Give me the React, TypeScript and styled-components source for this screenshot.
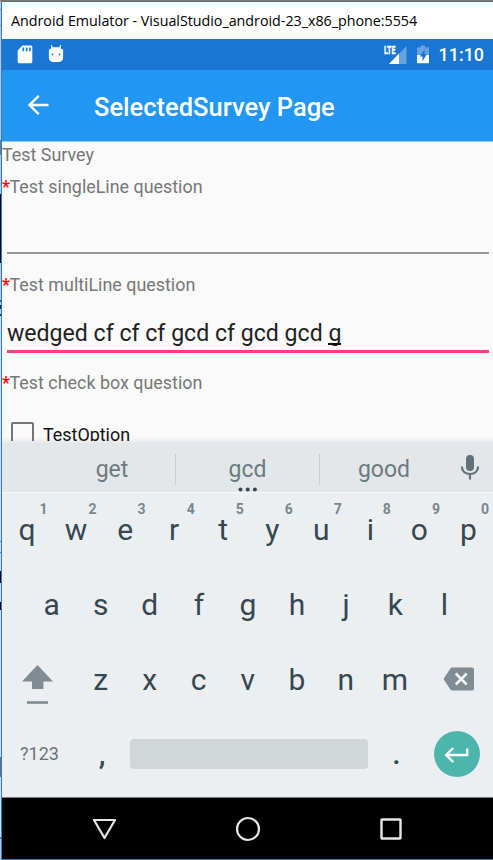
import React from "react";
import styled, { createGlobalStyle } from "styled-components";

const GlobalStyle = createGlobalStyle`
  * { box-sizing: border-box; }
  html, body { margin: 0; padding: 0; }
  body { width: 493px; height: 860px; overflow: hidden; font-family: Roboto, sans-serif; }
  svg { display: block; flex: none; }
`;

const Desktop = styled.div`
  width: 493px;
  height: 860px;
  padding: 1px 0 0 1px;
  background: linear-gradient(
    to bottom,
    #75797d 0 1px, #c4c6c8 1px 9px, #8a8d90 9px 10px, #c4c6c8 10px 25px, #8a8d90 25px 26px,
    #c4c6c8 26px 140px, #75797d 140px 155px, #c4c6c8 155px 194px, #000 194px 263px,
    #c4c6c8 263px 300px, #1b5f93 300px 302px, #c4c6c8 302px 305px, #222 305px 309px,
    #c4c6c8 309px 314px, #123 314px 316px, #d8dadc 316px 541px, #2b8bd6 541px 542px,
    #d8dadc 542px 552px, #2b8bd6 552px 553px, #d8dadc 553px 571px, #000 571px 583px,
    #d8dadc 583px 602px, #000 602px 610px, #d8dadc 610px 757px, #707274 757px 777px,
    #d8dadc 777px 837px, #777 837px 839px, #c4c6c8 839px
  );
`;

const TopEdge = styled.div`
  height: 1px;
  margin: -1px 0 0 -1px;
  background: #75797d;
`;

const Window = styled.div`
  height: 859px;
  display: flex;
  flex-direction: column;
  border: 1px solid #1f7fce;
  border-right: 0;
  background: #fafafa;
`;

const TitleBar = styled.div`
  height: 37px;
  flex: none;
  padding-left: 9px;
  background: #fff;
  color: #000;
  font: 14.3px/37px "Open Sans", sans-serif;
  letter-spacing: -0.02px;
  white-space: nowrap;
`;

const StatusBar = styled.div`
  height: 31px;
  flex: none;
  display: flex;
  align-items: center;
  padding: 0 9px 0 15px;
  background: #1976d2;
`;

const StatusGroup = styled.div<{ $gap: number; $end?: boolean }>`
  display: flex;
  align-items: center;
  gap: ${(p) => p.$gap}px;
  margin-left: ${(p) => (p.$end ? "auto" : "0")};
`;

const Clock = styled.span`
  color: #fff;
  font-size: 17.9px;
  font-weight: 500;
  line-height: 31px;
`;

const AppBar = styled.header`
  height: 72px;
  flex: none;
  display: flex;
  align-items: center;
  padding-left: 23px;
  background: #2196f3;
  border-bottom: 1px solid #8ccafb;
`;

const BackButton = styled.div`
  margin-top: -2px;
`;

const PageTitle = styled.h1`
  margin: 3px 0 0 45px;
  color: #fff;
  font-size: 25.5px;
  font-weight: 500;
  line-height: 32px;
  white-space: nowrap;
`;

const Survey = styled.main`
  height: 301px;
  flex: none;
  overflow: hidden;
  padding-top: 1px;
  position: relative;
`;

const Label = styled.div<{ $top?: number }>`
  margin-top: ${(p) => p.$top ?? 0}px;
  height: 24px;
  color: #777;
  font-size: 17.9px;
  line-height: 24px;
  white-space: nowrap;
`;

const Required = styled.span`
  color: #f00;
  font-weight: 500;
  letter-spacing: -0.4px;
`;

const Field = styled.div<{ $active?: boolean }>`
  height: ${(p) => (p.$active ? 56 : 55)}px;
  margin: 0 4px 0 5px;
  padding-top: 21px;
  border-bottom: ${(p) => (p.$active ? "3px solid #ff4081" : "2px solid #979797")};
  color: #212121;
  font-size: 23.1px;
  line-height: 32px;
  white-space: pre;
`;

const Composing = styled.span`
  position: relative;
  &::after {
    content: "";
    position: absolute;
    left: 0;
    right: 0;
    bottom: 2px;
    height: 2px;
    background: #111;
  }
`;

const CheckRow = styled.div`
  position: relative;
  display: flex;
  height: 19px;
  overflow: hidden;
  margin-top: 27px;
  padding-left: 9px;
  gap: 9px;
  color: #111;
  font-size: 17.9px;
  line-height: 26px;
`;

const Box = styled.span`
  flex: none;
  width: 23px;
  height: 23px;
  border: 2.5px solid #757575;
  border-radius: 2px;
`;

const Shade = styled.div`
  position: absolute;
  left: 0;
  right: 0;
  bottom: 0;
  height: 6px;
  background: linear-gradient(to bottom, rgba(245, 245, 245, 0), #efefef 60%, #e6e7e8);
`;

const Suggestions = styled.div`
  height: 50px;
  flex: none;
  display: flex;
  align-items: center;
  padding-left: 47px;
  background: #e3e7ea;
  border-bottom: 1px solid #f6f8f9;
`;

const Suggestion = styled.div<{ $width: number; $divided?: boolean }>`
  position: relative;
  width: ${(p) => p.$width}px;
  height: 31px;
  margin-top: 3px;
  border-right: ${(p) => (p.$divided ? "1px solid #c9cdd0" : "0")};
  color: #6d7a7f;
  font-size: 23px;
  line-height: 31px;
  text-align: center;
`;

const MoreDots = styled.svg`
  position: absolute;
  left: 62px;
  top: 33px;
`;

const MicButton = styled.div`
  margin-left: 12px;
`;

const Keyboard = styled.div`
  height: 305px;
  flex: none;
  display: flex;
  flex-direction: column;
  background: #ebeff2;
  border-bottom: 1px solid #777b7e;
`;

const KeyRow = styled.div<{ $inset?: boolean }>`
  height: 75px;
  flex: none;
  display: flex;
  align-items: center;
  padding: ${(p) => (p.$inset ? "0 24px 0 25px" : "0 0 0 0.5px")};
  &:first-child { margin-top: -1px; }
  &:last-child { height: 74px; }
`;

const Key = styled.div<{ $wide?: boolean }>`
  position: relative;
  flex: ${(p) => (p.$wide ? "0 0 73.6px" : "1 1 0")};
  height: 75px;
  display: flex;
  align-items: center;
  justify-content: center;
  color: #37474f;
  font-size: 30px;
  line-height: 75px;
`;

const ShiftIcon = styled.svg`
  margin: 11px 4px 0 0;
`;

const BackspaceIcon = styled.svg`
  margin: 0 0 2px 5px;
`;

const Hint = styled.span`
  position: absolute;
  right: 4px;
  top: 9px;
  color: #79868b;
  font-size: 14px;
  font-weight: 700;
  line-height: 16px;
`;

const SymbolKey = styled.div`
  width: 74px;
  text-align: center;
  color: #67757b;
  font-size: 18px;
  line-height: 74px;
`;

const Punctuation = styled.div<{ $width: number; $shift?: number }>`
  width: ${(p) => p.$width}px;
  padding-right: ${(p) => p.$shift ?? 0}px;
  color: #37474f;
  font-size: 30px;
  font-weight: 500;
  line-height: 74px;
  text-align: center;
`;

const SpaceBar = styled.div`
  width: 238px;
  height: 30px;
  border-radius: 4px;
  background: #d1d6d9;
`;

const EnterKey = styled.div`
  width: 46px;
  height: 46px;
  margin-left: 8.500px;
  display: flex;
  align-items: center;
  justify-content: center;
  border-radius: 50%;
  background: #4db6ac;
`;

const NavBar = styled.nav`
  flex: 1;
  display: flex;
  align-items: center;
  justify-content: space-between;
  padding: 0 90px 0 89px;
  background: #000;
`;

const SdCard = () => (
  <svg width="16" height="19" viewBox="0 0 16 19">
    <path d="M5.5 .5H14a1.3 1.3 0 0 1 1.3 1.3v15A1.3 1.3 0 0 1 14 18.2H2a1.3 1.3 0 0 1-1.3-1.3V5.6z" fill="#fff" />
    <path d="M6.3 2.5v3.700M9.700 2.5v3.700M12.900 2.5v3.700" stroke="#1976d2" strokeWidth="1.7" />
  </svg>
);

const DroidHead = () => (
  <svg width="16" height="19" viewBox="0 0 16 19">
    <path d="M3.2 .2L4.5 3.500M12.8 .2L11.5 3.500" stroke="#fff" strokeWidth="1.2" />
    <path d="M4 2.200h8l1.800 2h1.300v8.500a4.300 4.300 0 0 1-4.300 4.300H5.200A4.300 4.300 0 0 1 .9 12.700V4.200h1.300z" fill="#fff" />
    <circle cx="4.500" cy="9.500" r=".9" fill="#1976d2" />
    <circle cx="11.500" cy="9.500" r=".9" fill="#1976d2" />
  </svg>
);

const Signal = () => (
  <svg width="23" height="20" viewBox="0 0 23 20">
    <path d="M22.500 1v18H5z" fill="#64a3e1" />
    <path d="M15 8.500V19H5z" fill="#fff" />
    <path d="M0 0h12v10H0z" fill="#1976d2" />
    <text x="0" y="9" fill="#fff" stroke="#fff" strokeWidth=".35" fontFamily="Roboto" fontWeight="700" fontSize="11" textLength="11.500" lengthAdjust="spacingAndGlyphs">LTE</text>
  </svg>
);

const Battery = () => (
  <svg width="12" height="19" viewBox="0 0 12 19">
    <path d="M0 3.200a1 1 0 0 1 1-1h2.700V.5h4.600v1.700H11a1 1 0 0 1 1 1V10H0z" fill="#64a3e1" />
    <path d="M0 10h12v7.300a1 1 0 0 1-1 1H1a1 1 0 0 1-1-1z" fill="#fff" />
    <path d="M7.500 4.700L2.800 11.500h2.700v4.800l4.300-7H7.500z" fill="#1976d2" />
  </svg>
);

const BackArrow = () => (
  <svg width="24" height="22" viewBox="0 0 24 22">
    <path d="M24 11H5M14.200 1.800L5 11l9.200 9.200" transform="translate(-0.500 0)" fill="none" stroke="#fff" strokeWidth="2.400" />
  </svg>
);

const Mic = () => (
  <svg width="20" height="27" viewBox="0 0 20 27">
    <rect x="6" y="1" width="8" height="16" rx="4" fill="#637178" />
    <path d="M1.900 12.500c0 4.500 3.200 7.500 8.100 7.500s8.100-3 8.100-7.500M10 20v5.500" fill="none" stroke="#637178" strokeWidth="2.200" />
  </svg>
);

const Shift = () => (
  <ShiftIcon width="31" height="42" viewBox="0 0 31 42">
    <path d="M15.500 1L31 17.500H21.400V25H10V17.500H0z" fill="#808c91" />
    <path d="M5 38.500h21" stroke="#808c91" strokeWidth="2.600" />
  </ShiftIcon>
);

const Backspace = () => (
  <BackspaceIcon width="32" height="24" viewBox="0 0 32 24">
    <path d="M9 .5h20a2 2 0 0 1 2 2v19a2 2 0 0 1-2 2H9a2 2 0 0 1-1.600-.9L.5 12l6.900-10.600A2 2 0 0 1 9 .5z" fill="#808c91" />
    <path d="M12.700 6.500L23.700 17.500M23.700 6.500L12.700 17.500" stroke="#f3f6f8" strokeWidth="2.500" />
  </BackspaceIcon>
);

const Enter = () => (
  <svg width="26" height="18" viewBox="0 0 26 18">
    <path d="M23.200 3.500V10H2.500M9.200 3L2.200 10l7 7" fill="none" stroke="#fff" strokeWidth="2.400" />
  </svg>
);

const numberRow = ["q", "w", "e", "r", "t", "y", "u", "i", "o", "p"];
const homeRow = ["a", "s", "d", "f", "g", "h", "j", "k", "l"];
const bottomRow = ["z", "x", "c", "v", "b", "n", "m"];

export default function App() {
  return (
    <Desktop>
      <GlobalStyle />
      <TopEdge />
      <Window>
        <TitleBar>Android Emulator - VisualStudio_android-23_x86_phone:5554</TitleBar>
        <StatusBar>
          <StatusGroup $gap={15}>
            <SdCard />
            <DroidHead />
          </StatusGroup>
          <StatusGroup $gap={10} $end>
            <Signal />
            <Battery />
            <Clock>11:10</Clock>
          </StatusGroup>
        </StatusBar>
        <AppBar>
          <BackButton><BackArrow /></BackButton>
          <PageTitle>SelectedSurvey Page</PageTitle>
        </AppBar>
        <Survey>
          <Shade />
          <Label>Test Survey</Label>
          <Label $top={8}><Required>*</Required>Test singleLine question</Label>
          <Field />
          <Label $top={19}><Required>*</Required>Test multiLine question</Label>
          <Field $active>wedged cf cf cf gcd cf gcd gcd <Composing>g</Composing></Field>
          <Label $top={18}><Required>*</Required>Test check box question</Label>
          <CheckRow><Box />TestOption</CheckRow>
        </Survey>
        <Suggestions>
          <Suggestion $width={127} $divided>get</Suggestion>
          <Suggestion $width={144} $divided>
            gcd
            <MoreDots width="20" height="5" viewBox="0 0 20 5">
              <circle cx="2.500" cy="2.500" r="2" fill="#37474f" />
              <circle cx="9.700" cy="2.500" r="2" fill="#37474f" />
              <circle cx="16.900" cy="2.500" r="2" fill="#37474f" />
            </MoreDots>
          </Suggestion>
          <Suggestion $width={128}>good</Suggestion>
          <MicButton><Mic /></MicButton>
        </Suggestions>
        <Keyboard>
          <KeyRow>
            {numberRow.map((k, i) => (
              <Key key={k}>{k}<Hint>{(i + 1) % 10}</Hint></Key>
            ))}
          </KeyRow>
          <KeyRow $inset>
            {homeRow.map((k) => <Key key={k}>{k}</Key>)}
          </KeyRow>
          <KeyRow>
            <Key $wide><Shift /></Key>
            {bottomRow.map((k) => <Key key={k}>{k}</Key>)}
            <Key $wide><Backspace /></Key>
          </KeyRow>
          <KeyRow>
            <SymbolKey>?123</SymbolKey>
            <Punctuation $width={53} $shift={2}>,</Punctuation>
            <SpaceBar />
            <Punctuation $width={58}>.</Punctuation>
            <EnterKey><Enter /></EnterKey>
          </KeyRow>
        </Keyboard>
        <NavBar>
          <svg width="27" height="24" viewBox="0 0 27 24">
            <path d="M3 3h21L13.500 21z" fill="none" stroke="#e6e6e6" strokeWidth="2.200" strokeLinejoin="round" />
          </svg>
          <svg width="26" height="26" viewBox="0 0 26 26">
            <circle cx="12" cy="13" r="11" fill="none" stroke="#e6e6e6" strokeWidth="2.200" />
          </svg>
          <svg width="24" height="24" viewBox="0 0 24 24">
            <rect x="2.500" y="2.500" width="19" height="19" rx=".5" fill="none" stroke="#e6e6e6" strokeWidth="2.400" />
          </svg>
        </NavBar>
      </Window>
    </Desktop>
  );
}
